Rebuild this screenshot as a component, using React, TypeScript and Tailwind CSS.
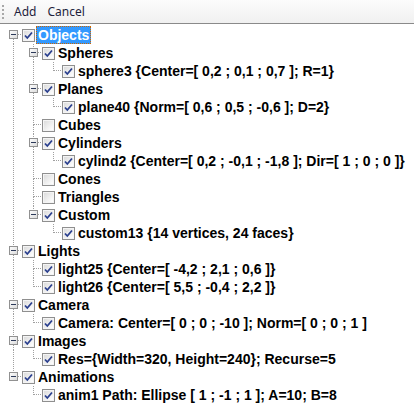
import React from "react";

type Node = { label: string; checked?: boolean; children?: Node[] };

const tree: Node[] = [
  {
    label: "Objects",
    children: [
      { label: "Spheres", children: [{ label: "sphere3 {Center=[ 0,2 ; 0,1 ; 0,7 ]; R=1}" }] },
      { label: "Planes", children: [{ label: "plane40 {Norm=[ 0,6 ; 0,5 ; -0,6 ]; D=2}" }] },
      { label: "Cubes", checked: false },
      { label: "Cylinders", children: [{ label: "cylind2 {Center=[ 0,2 ; -0,1 ; -1,8 ]; Dir=[ 1 ; 0 ; 0 ]}" }] },
      { label: "Cones", checked: false },
      { label: "Triangles", checked: false },
      { label: "Custom", children: [{ label: "custom13 {14 vertices, 24 faces}" }] },
    ],
  },
  {
    label: "Lights",
    children: [{ label: "light25 {Center=[ -4,2 ; 2,1 ; 0,6 ]}" }, { label: "light26 {Center=[ 5,5 ; -0,4 ; 2,2 ]}" }],
  },
  { label: "Camera", children: [{ label: "Camera: Center=[ 0 ; 0 ; -10 ]; Norm=[ 0 ; 0 ; 1 ]" }] },
  { label: "Images", children: [{ label: "Res={Width=320, Height=240}; Recurse=5" }] },
  { label: "Animations", children: [{ label: "anim1 Path: Ellipse [ 1 ; -1 ; 1 ]; A=10; B=8" }] },
];

type Row = {
  node: Node;
  guides: boolean[];
  first: boolean;
  last: boolean;
  selected: boolean;
};

function flatten(nodes: Node[], guides: boolean[], rows: Row[], root: boolean) {
  nodes.forEach((node, i) => {
    const last = i === nodes.length - 1;
    rows.push({ node, guides, first: root && i === 0, last, selected: root && i === 0 });
    if (node.children) flatten(node.children, [...guides, !last], rows, false);
  });
  return rows;
}

const LINE = "#a0a0a0";

function Guide({ on }: { on: boolean }) {
  return (
    <svg width="20" height="18" className="shrink-0">
      {on && <line x1="11.5" y1="0" x2="11.5" y2="18" stroke={LINE} strokeDasharray="1 1" shapeRendering="crispEdges" />}
    </svg>
  );
}

function Expander({ row }: { row: Row }) {
  const hasKids = !!row.node.children;
  return (
    <svg width="20" height="18" className="shrink-0">
      {!row.first && <line x1="11.5" y1="0" x2="11.5" y2="9" stroke={LINE} strokeDasharray="1 1" shapeRendering="crispEdges" />}
      {!row.last && <line x1="11.5" y1="9" x2="11.5" y2="18" stroke={LINE} strokeDasharray="1 1" shapeRendering="crispEdges" />}
      <line x1="12" y1="8.5" x2="20" y2="8.5" stroke={LINE} strokeDasharray="1 1" shapeRendering="crispEdges" />
      {hasKids && (
        <g shapeRendering="crispEdges">
          <defs>
            <linearGradient id="exp" x1="0" y1="0" x2="1" y2="1">
              <stop offset="0" stopColor="#ffffff" />
              <stop offset="1" stopColor="#d9d9d9" />
            </linearGradient>
          </defs>
          <rect x="7.5" y="4.5" width="8" height="8" fill="url(#exp)" stroke="#919191" />
          <line x1="9" y1="8.5" x2="14" y2="8.5" stroke="#2d3a5a" />
        </g>
      )}
    </svg>
  );
}

function Check({ checked }: { checked: boolean }) {
  return (
    <svg width="13" height="13" className="shrink-0" shapeRendering="crispEdges">
      <defs>
        <linearGradient id="chk" x1="0" y1="0" x2="1" y2="1">
          <stop offset="0" stopColor="#dcdcdc" />
          <stop offset="1" stopColor="#ffffff" />
        </linearGradient>
      </defs>
      <rect x="0.5" y="0.5" width="12" height="12" fill="#f4f4f4" stroke="#8f8f8f" />
      <rect x="2" y="2" width="9" height="9" fill="url(#chk)" />
      {checked && (
        <path d="M3 6.5 L5.3 9 L10 3.5" fill="none" stroke="#2a3f8e" strokeWidth="1.8" shapeRendering="geometricPrecision" />
      )}
    </svg>
  );
}

export default function App() {
  const rows = flatten(tree, [], [], true);
  return (
    <div className="w-[414px] h-[409px] bg-white overflow-hidden" style={{ fontFamily: '"Liberation Sans", Arial, sans-serif' }}>
      <div className="h-[24px] flex items-center border-b border-[#8a8a8a] bg-gradient-to-b from-[#fcfcfc] to-[#f0f0f0]">
        <div className="ml-[2px] mr-[7px] flex flex-col gap-[2px]">
          {[0, 1, 2, 3].map((i) => (
            <div key={i} className="w-[2px] h-[2px] bg-[#a8a8a8]" />
          ))}
        </div>
        <div className="flex gap-[11px] text-[12px] text-[#1e1e3c] pl-[3px]" style={{ fontFamily: '"Noto Sans", "Open Sans", sans-serif' }}>
          <span>Add</span>
          <span>Cancel</span>
        </div>
      </div>
      <div className="pt-[2px] pl-[2px]">
        {rows.map((row, i) => (
          <div key={i} className="flex items-center h-[18px]">
            {row.guides.map((g, j) => (
              <Guide key={j} on={g} />
            ))}
            <Expander row={row} />
            <Check checked={row.node.checked !== false} />
            <span
              className={
                "ml-[1px] h-[18px] leading-[17px] px-[1px] whitespace-nowrap text-[14px] font-bold " +
                (row.selected ? "bg-[#3399ff] text-white border border-dotted border-[#cc6600] leading-[15px]" : "text-black border border-transparent")
              }
            >
              {row.node.label}
            </span>
          </div>
        ))}
      </div>
    </div>
  );
}
